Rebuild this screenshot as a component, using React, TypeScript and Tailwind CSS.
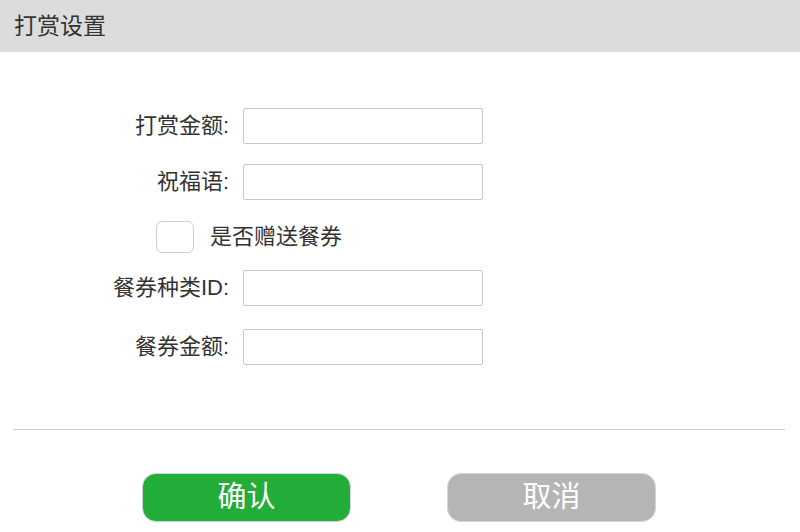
import { useState } from "react";

const font = { fontFamily: '"Liberation Sans", "Noto Sans CJK SC", sans-serif' };

const Field = ({ label, className }: { label: string; className?: string }) => (
  <div className={`flex items-center ${className ?? ""}`}>
    <label className="w-[229px] text-right text-[22px] leading-none text-[#333]">{label}</label>
    <input
      type="text"
      className="ml-[14px] h-[36px] w-[240px] rounded-[2px] border border-[#c8c8c8] bg-white px-2 text-[16px] outline-none"
    />
  </div>
);

export default function App() {
  const [giveCoupon, setGiveCoupon] = useState(false);

  return (
    <div className="h-[532px] w-[800px] overflow-hidden bg-white" style={font}>
      {/* header */}
      <div className="flex h-[52px] items-center bg-[#dcdcdc] pl-[14px] text-[23px] text-[#333]">打赏设置</div>

      {/* form */}
      <div className="flex flex-col pt-[56px]">
        <Field label="打赏金额:" />
        <Field label="祝福语:" className="mt-[20px]" />

        <div className="mt-[21px] flex items-center pl-[156px]">
          <button
            onClick={() => setGiveCoupon(!giveCoupon)}
            className="h-[32px] w-[38px] rounded-[6px] border border-[#cfcfcf] bg-white"
          >
            {giveCoupon && <span className="text-[#22ac38]">✓</span>}
          </button>
          <span className="ml-[16px] text-[22px] leading-none text-[#333]">是否赠送餐券</span>
        </div>

        <Field label="餐券种类ID:" className="mt-[17px]" />
        <Field label="餐券金额:" className="mt-[23px]" />
      </div>

      {/* divider */}
      <div className="ml-[13px] mr-[15px] mt-[64px] h-px bg-[#cccccc]" />

      {/* buttons */}
      <div className="mt-[43px] flex pl-[142px]">
        <button className="flex h-[49px] w-[209px] items-center justify-center rounded-[14px] border border-[#d6d6d6] bg-[#22ac38] text-[29px] text-white">
          确认
        </button>
        <button className="ml-[96px] flex h-[49px] w-[209px] items-center justify-center rounded-[14px] border border-[#d6d6d6] bg-[#b5b5b5] text-[29px] text-white">
          取消
        </button>
      </div>
    </div>
  );
}
